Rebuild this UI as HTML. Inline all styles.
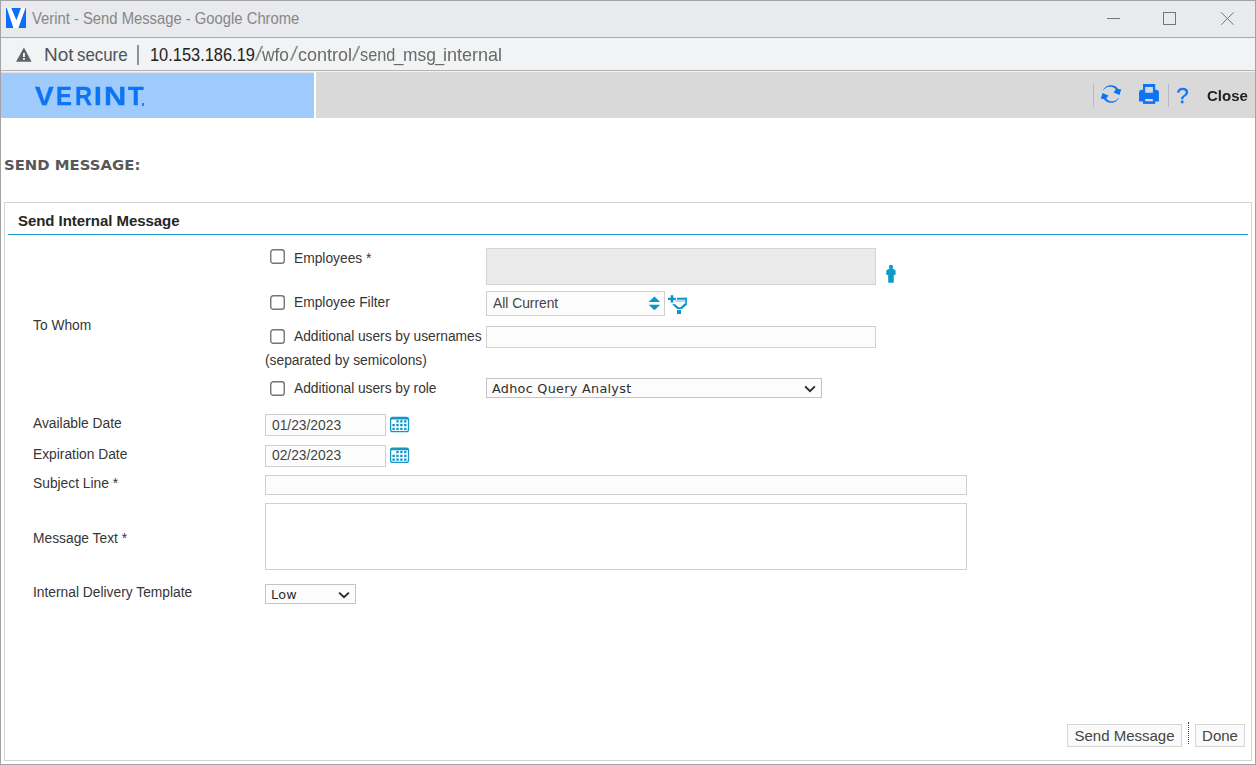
<!DOCTYPE html>
<html><head><meta charset="utf-8"><title>Verint - Send Message</title>
<style>
*{box-sizing:border-box;margin:0;padding:0}
html,body{width:1256px;height:765px;overflow:hidden;background:#fff}
body{position:relative;font-family:"Liberation Sans",Arial,sans-serif;font-size:14px;color:#333}
.abs{position:absolute}
#win{position:absolute;left:0;top:0;width:1256px;height:765px;border:1px solid #a3a3a3;pointer-events:none;z-index:50}
#titlebar{left:1px;top:1px;width:1254px;height:36px;background:#e8eaed}
#title{left:32px;top:9.7px;font-size:15.6px;color:#878787;white-space:nowrap;line-height:18px;transform:scaleX(0.949);transform-origin:0 0}
#tline{left:1px;top:37px;width:1254px;height:1px;background:#a9a9a9}
#urlbar{left:1px;top:38px;width:1254px;height:32px;background:#f1f3f4}
#uline{left:1px;top:70px;width:1254px;height:1px;background:#b3b3b3}
#uline2{left:1px;top:71px;width:1254px;height:1px;background:#f1f2f3}
.ut{top:43.5px;font-size:18.2px;line-height:22px;white-space:nowrap;transform-origin:0 0}
#upath span{position:absolute;top:0;transform-origin:0 0;display:block}
#upath span.sl{transform:skewX(-11deg) scaleY(1.12);transform-origin:0 17px;will-change:transform}
#hblue{left:1px;top:73px;width:313px;height:45px;background:#9fcbfc}
#hblue0{left:1px;top:72px;width:313px;height:1px;background:#e3e3e3}
#hgray{left:316px;top:72px;width:939px;height:46px;background:#d9d9d9}
#logo{left:0;top:83.4px;width:200px;height:30px;font-size:26px;font-weight:bold;color:#0d74f5;line-height:26px}
#logo span{-webkit-text-stroke:0.35px #0d74f5;position:absolute;top:0;transform-origin:0 0;display:block}
#logo i{position:absolute;left:141.5px;top:19.9px;width:2.1px;height:2.4px;background:#1f7df6}
.vsep{width:1px;background:#b9b8c2;top:84px;height:23px}
#close{left:1207px;top:87px;font-size:15px;font-weight:bold;color:#222;line-height:18px}
#h1{left:4px;top:155px;font-family:"DejaVu Sans",Verdana,sans-serif;font-weight:bold;font-size:14px;color:#585858;line-height:20px;white-space:nowrap;transform:scaleX(1.062);transform-origin:0 0}
#panel{left:4px;top:202px;width:1248px;height:559px;border:1px solid #d3d3d3}
#ptitle{left:18px;top:212px;font-size:15px;font-weight:bold;color:#262626;letter-spacing:-0.05px;line-height:18px;white-space:nowrap}
#pline{left:8px;top:234px;width:1240px;height:1px;background:#1f9ccf}
.lbl{font-size:13.8px;line-height:18px;color:#363636;white-space:nowrap}
.cb{width:14px;height:14px;border:1px solid #767676;border-radius:2.5px;background:#fff}
.it{color:#444}
.inp{border:1px solid #d0d0d0;background:#fcfcfc}
.vd{font-family:"DejaVu Sans",Verdana,sans-serif;font-size:12.3px;line-height:18px;color:#2e2e2e;white-space:nowrap;letter-spacing:0.27px;transform:scaleX(1.04);transform-origin:0 0}
.btn{border:1px solid #d6d6d6;background:#fafafa;font-size:15px;color:#444;line-height:18px;text-align:center;white-space:nowrap}
</style></head><body>
<div class="abs" id="titlebar"></div>
<div class="abs" id="tline"></div>
<div class="abs" id="urlbar"></div>
<div class="abs" id="uline"></div>
<div class="abs" id="uline2"></div>
<svg class="abs" style="left:6px;top:8px" width="20" height="20" viewBox="0 0 20 20"><rect width="20" height="20" fill="#0d6efd"/><path d="M0.8 0 L5.25 0 L10.4 12.2 L14.9 0 L19.5 0 L12.4 20 L7.4 20 Z" fill="#fff"/></svg>
<div class="abs" id="title">Verint - Send Message - Google Chrome</div>
<svg class="abs" style="left:1100px;top:8px" width="150" height="22" viewBox="0 0 150 22" fill="none" stroke="#757575" stroke-width="1"><path d="M7 10.5H20"/><rect x="63.5" y="4.5" width="12" height="12"/><path d="M121.2 4.4 L133.6 16.8 M133.6 4.4 L121.2 16.8"/></svg>
<svg class="abs" style="left:16px;top:47px" width="16" height="16" viewBox="0 0 16 16"><path d="M7.9 0.6 L15.6 14.7 L0.1 14.7 Z" fill="#5f6368"/><rect x="7" y="6" width="1.9" height="4" fill="#f1f3f4"/><rect x="7" y="11" width="1.9" height="1.9" fill="#f1f3f4"/></svg>
<div class="abs ut" style="left:44px;color:#505357;transform:scaleX(1.043)">Not</div> <div class="abs ut" style="left:77.2px;color:#505357;transform:scaleX(0.927)">secure</div>
<div class="abs" style="left:137px;top:45px;width:2px;height:20px;background:#929292"></div>
<div class="abs ut" style="left:150px;color:#222;transform:scaleX(0.902)">10.153.186.19</div>
<div class="abs ut" id="upath" style="left:0;color:#6a6a6a"><span class="sl" style="left:255.30px">/</span><span style="left:262.40px;transform:scaleX(0.953)">wfo</span><span class="sl" style="left:290.10px">/</span><span style="left:297.91px;transform:scaleX(0.990)">control</span><span class="sl" style="left:351.70px">/</span><span style="left:359.55px;transform:scaleX(0.894)">send</span><span style="left:394.08px;transform:scaleX(0.943)">_</span><span style="left:402.65px;transform:scaleX(0.956)">msg</span><span style="left:434.67px;transform:scaleX(0.906)">_</span><span style="left:442.81px;transform:scaleX(0.991)">internal</span></div>

<div class="abs" id="hblue0"></div>
<div class="abs" id="hblue"></div>
<div class="abs" id="hgray"></div>
<div class="abs" id="logo"><span style="left:34.58px;transform:scaleX(1.077)">V</span><span style="left:56.04px;transform:scaleX(0.918)">E</span><span style="left:74.65px;transform:scaleX(0.909)">R</span><span style="left:94.07px;transform:scaleX(1.079)">I</span><span style="left:104.29px;transform:scaleX(1.183)">N</span><span style="left:128.20px;transform:scaleX(0.98)">T</span><i></i></div>
<div class="abs vsep" style="left:1093px"></div>
<div class="abs vsep" style="left:1168px"></div>
<svg class="abs" style="left:1098px;top:81px;filter:blur(0.45px)" width="26" height="26" viewBox="1098 81 26 26"><g id="rf" fill="#0d74f5"><path d="M1103.09 90.14 L1103.77 88.98 L1104.63 87.93 L1105.63 87.03 L1106.76 86.29 L1107.99 85.73 L1109.29 85.37 L1110.63 85.21 L1111.98 85.25 L1113.31 85.51 L1114.58 85.96 L1115.77 86.60 L1116.84 87.42 L1117.78 88.39 L1118.56 89.49 L1119.16 90.70 L1116.70 91.70 L1116.41 90.78 L1115.96 89.89 L1115.38 89.07 L1114.65 88.34 L1113.80 87.71 L1112.84 87.22 L1111.80 86.87 L1110.69 86.68 L1109.55 86.67 L1108.39 86.84 L1107.26 87.20 L1106.17 87.73 L1105.17 88.44 L1104.26 89.32 L1103.50 90.34 Z"/><path d="M1113.60 92.60 L1116.00 88.90 L1121.20 89.20 L1119.50 95.00 Z"/></g><use href="#rf" transform="rotate(180 1111 94)"/></svg>
<svg class="abs" style="left:1136px;top:82px" width="26" height="24" viewBox="1136 82 26 24" fill="#0d74f5"><path d="M1143 84 H1155.2 V93.5 H1143 Z"/><path d="M1142 89.7 H1156 Q1158.9 89.7 1158.9 92.6 V101.4 H1139 V92.6 Q1139 89.7 1142 89.7 Z"/><path d="M1143 98 H1155.2 V103.9 H1143 Z"/><path fill="#d9d9d9" d="M1145.2 86.9 H1152.9 V92.8 H1145.2 Z M1145.2 99.1 H1152.9 V101.2 H1145.2 Z"/></svg>
<div class="abs" style="left:1176.3px;top:83px;font-size:22.6px;line-height:26px;color:#0d74f5;-webkit-text-stroke:0.3px #0d74f5">?</div>
<div class="abs" id="close">Close</div>

<div class="abs" id="h1">SEND MESSAGE:</div>
<div class="abs" id="panel"></div>
<div class="abs" id="ptitle">Send Internal Message</div>
<div class="abs" id="pline"></div>

<div class="abs lbl" style="left:33px;top:317px">To Whom</div>
<svg class="abs" style="left:270px;top:249px" width="15" height="15" viewBox="0 0 15 15"><rect x="0.75" y="0.75" width="13.5" height="13.5" rx="2.6" fill="#fff" stroke="#747474" stroke-width="1.4"/></svg>
<div class="abs lbl" style="left:294px;top:250px">Employees *</div>
<div class="abs" style="left:486px;top:248px;width:390px;height:37px;border:1px solid #d4d4d4;background:#eaeaea"></div>
<svg class="abs" style="left:270px;top:295px" width="15" height="15" viewBox="0 0 15 15"><rect x="0.75" y="0.75" width="13.5" height="13.5" rx="2.6" fill="#fff" stroke="#747474" stroke-width="1.4"/></svg>
<div class="abs lbl" style="left:294px;top:294px">Employee Filter</div>
<div class="abs inp" style="left:486px;top:291px;width:179px;height:25px"></div>
<div class="abs lbl it" style="left:493px;top:295px">All Current</div>
<svg class="abs" style="left:270px;top:329px" width="15" height="15" viewBox="0 0 15 15"><rect x="0.75" y="0.75" width="13.5" height="13.5" rx="2.6" fill="#fff" stroke="#747474" stroke-width="1.4"/></svg>
<div class="abs lbl" style="left:294px;top:328px;letter-spacing:-0.04px">Additional users by usernames</div>
<div class="abs inp" style="left:486px;top:326px;width:390px;height:22px"></div>
<div class="abs lbl" style="left:265px;top:352px">(separated by semicolons)</div>
<svg class="abs" style="left:270px;top:381px" width="15" height="15" viewBox="0 0 15 15"><rect x="0.75" y="0.75" width="13.5" height="13.5" rx="2.6" fill="#fff" stroke="#747474" stroke-width="1.4"/></svg>
<div class="abs lbl" style="left:294px;top:380px;letter-spacing:-0.04px">Additional users by role</div>
<div class="abs inp" style="left:486px;top:378px;width:336px;height:20px;border-color:#c4c4c4"></div>
<div class="abs vd" style="left:492px;top:379.5px">Adhoc Query Analyst</div>

<div class="abs lbl" style="left:33px;top:415px">Available Date</div>
<div class="abs inp" style="left:265px;top:414px;width:121px;height:22px"></div>
<div class="abs lbl it" style="left:272px;top:417px">01/23/2023</div>
<div class="abs lbl" style="left:33px;top:446px">Expiration Date</div>
<div class="abs inp" style="left:265px;top:445px;width:121px;height:22px"></div>
<div class="abs lbl it" style="left:272px;top:447px">02/23/2023</div>
<div class="abs lbl" style="left:33px;top:475px">Subject Line *</div>
<div class="abs inp" style="left:265px;top:475px;width:702px;height:20px"></div>
<div class="abs lbl" style="left:33px;top:530px">Message Text *</div>
<div class="abs" style="left:265px;top:503px;width:702px;height:67px;border:1px solid #d0d0d0;background:#fff"></div>
<div class="abs lbl" style="left:33px;top:584px">Internal Delivery Template</div>
<div class="abs inp" style="left:265px;top:584px;width:91px;height:20px;border-color:#c4c4c4"></div>
<div class="abs vd" style="left:271px;top:585.5px">Low</div>


<svg class="abs" style="left:640px;top:285px" width="60" height="37" viewBox="640 285 60 37"><g fill="#0a96c8"><path d="M654.4 296.6 L660.2 302 H648.6 Z"/><path d="M654.4 310.2 L660.2 304.8 H648.6 Z"/><rect x="668" y="297.8" width="7.8" height="2.2"/><rect x="670.7" y="295.2" width="2.6" height="7.4"/><rect x="677" y="297.7" width="9.9" height="2"/><rect x="685.3" y="297.7" width="1.6" height="6"/><rect x="675" y="300.4" width="10.4" height="1.4" opacity="0.45"/><path d="M672 304.3 H675.2 L678.6 307.2 H680.7 L684.4 303.6 H686.9 V304.6 L682 309 H677.2 Z"/><rect x="677" y="310" width="4" height="4"/></g></svg>
<svg class="abs" style="left:884px;top:262px" width="14" height="24" viewBox="884 262 14 24"><g fill="#0e9acb"><ellipse cx="891" cy="266.9" rx="2.1" ry="2.2"/><path d="M887.8 269.4 L889.6 268.6 H892.4 L894.2 269.4 Q895.6 269.8 895.6 271 V274 Q895.6 275 894.6 275 H893.8 V282 Q893.8 282.7 893.1 282.7 H888.9 Q888.2 282.7 888.2 282 V275 H887.4 Q886.3 275 886.3 274 V271 Q886.3 269.8 887.8 269.4 Z"/></g></svg>
<svg class="abs" style="left:800px;top:382px" width="20" height="14" viewBox="800 382 20 14"><path d="M805.1 386.4 L810 391.1 L814.9 386.4" fill="none" stroke="#2b2b2b" stroke-width="1.9"/></svg>
<svg class="abs" style="left:334px;top:588px" width="20" height="14" viewBox="334 588 20 14"><path d="M339.1 592.6 L344 597.3 L348.9 592.6" fill="none" stroke="#2b2b2b" stroke-width="1.9"/></svg>
<svg class="abs cal" style="left:388px;top:414px" width="24" height="22" viewBox="388 414.4 24 22"><use href="#cal"/></svg>
<svg class="abs cal" style="left:388px;top:445px" width="24" height="22" viewBox="388 414.7 24 22"><use href="#cal"/></svg>
<svg width="0" height="0" style="position:absolute"><defs><g id="cal"><rect x="390.6" y="417.9" width="17.9" height="14.2" rx="2.2" fill="#fff" stroke="#1496c6" stroke-width="1.3"/><path d="M390.6 420 V419.5 Q390.6 417.7 392.6 417.7 H406.5 Q408.5 417.7 408.5 419.5 V420 Z" fill="#1496c6"/><g fill="#1496c6"><rect x="396.3" y="420.6" width="2.4" height="2.3"/><rect x="400.2" y="420.6" width="2.4" height="2.3"/><rect x="404.1" y="420.6" width="2.4" height="2.3"/><rect x="392.4" y="424.4" width="2.4" height="2.3"/><rect x="396.3" y="424.4" width="2.4" height="2.3"/><rect x="400.2" y="424.4" width="2.4" height="2.3"/><rect x="404.1" y="424.4" width="2.4" height="2.3"/><rect x="392.4" y="428.2" width="2.4" height="2.3"/><rect x="396.3" y="428.2" width="2.4" height="2.3"/><rect x="400.2" y="428.2" width="2.4" height="2.3"/><rect x="404.1" y="428.2" width="2.4" height="2.3"/></g></g></defs></svg>
<div class="abs btn" style="left:1067px;top:724px;width:115px;height:23px;padding-top:2px">Send Message</div>
<div class="abs" style="left:1188px;top:722px;width:0;height:22px;border-left:1px dotted #444"></div>
<div class="abs btn" style="left:1195px;top:724px;width:50px;height:23px;padding-top:2px">Done</div>
<div id="win"></div>
</body></html>
